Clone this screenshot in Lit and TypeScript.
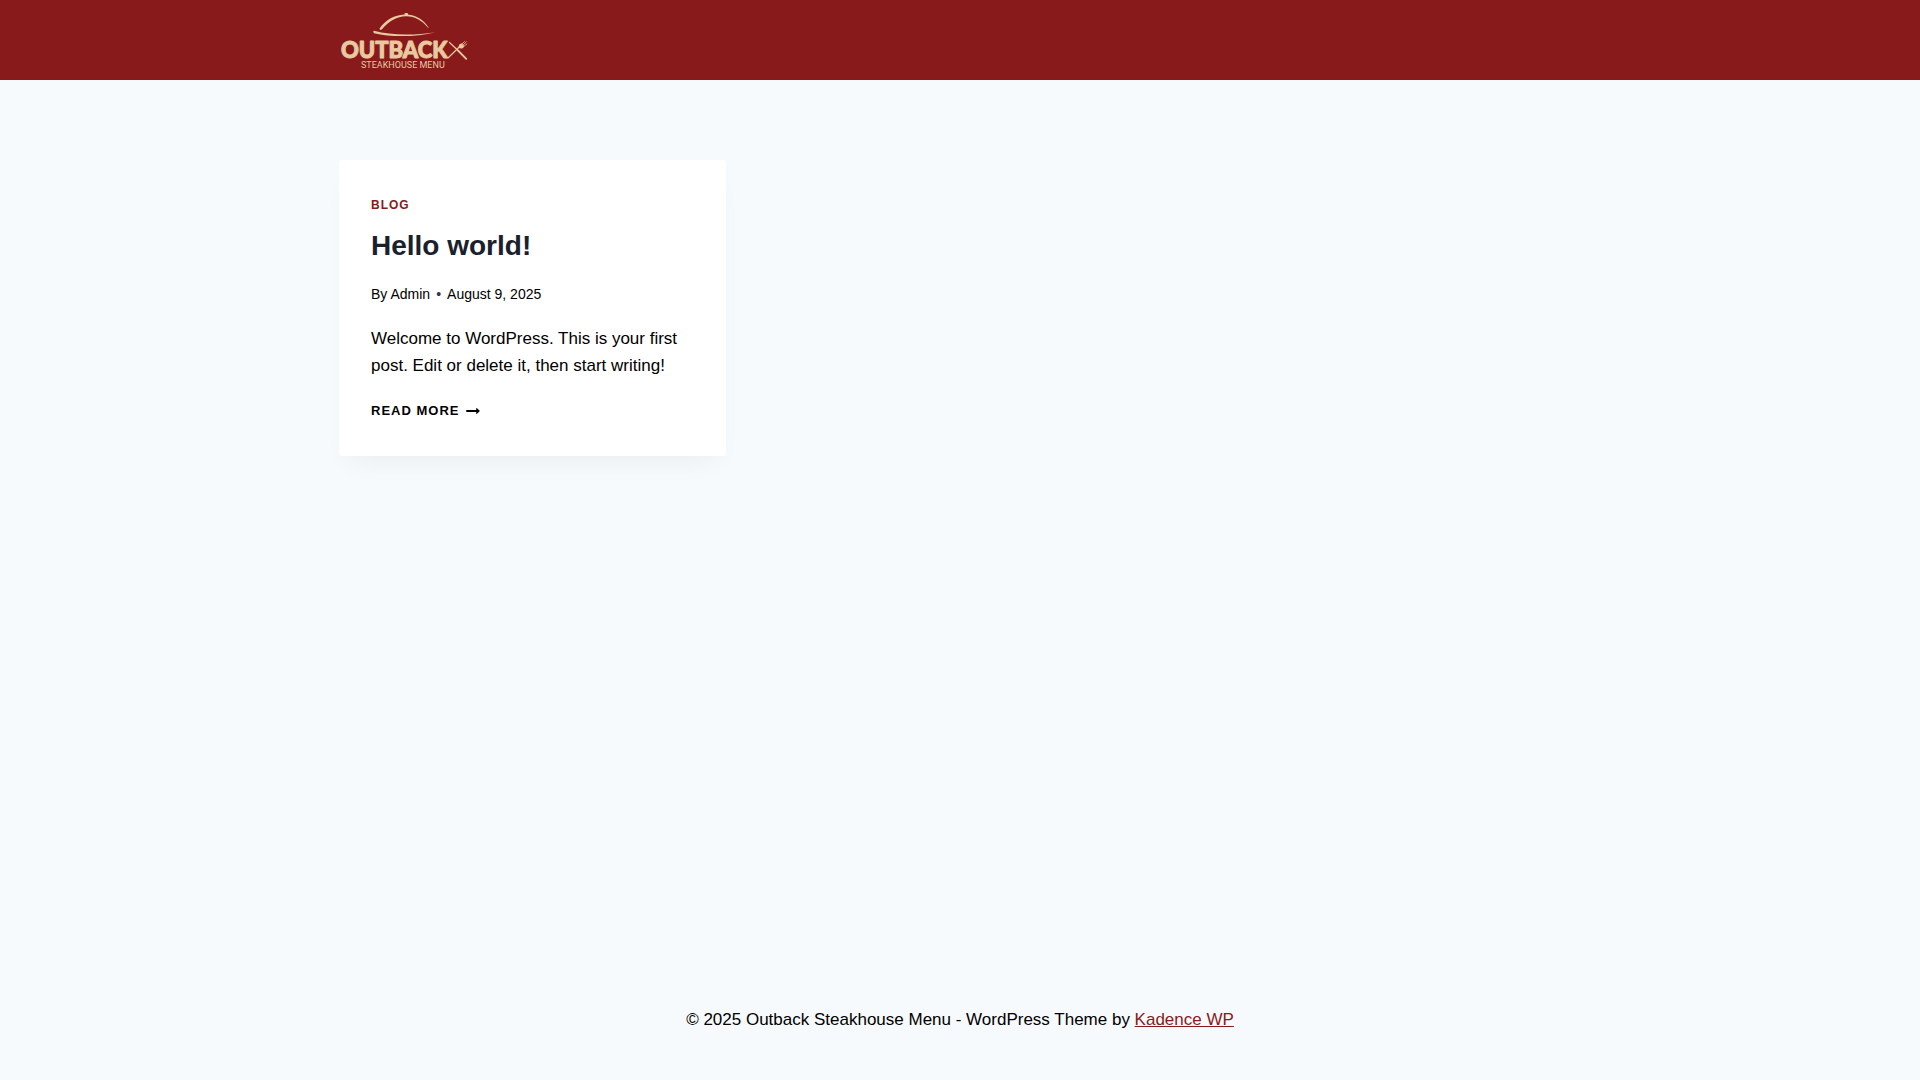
import { LitElement, html, css } from "lit";
import { customElement } from "lit/decorators.js";

@customElement("site-logo")
class SiteLogo extends LitElement {
  static styles = css`
    :host { display: block; }
    .logo { display: block; width: 130px; height: 60px; }
    .brand { font: 900 22px Lato, sans-serif; stroke-width: 1; stroke-linejoin: round; }
    .tagline { font: 9px Roboto, "Liberation Sans", sans-serif; }
  `;
  render() {
    return html`
      <svg class="logo" viewBox="0 0 130 60" role="img" aria-label="Outback Steakhouse Menu" fill="#e8c9a0">
        <path d="M40.500 18.500C47 9.500 56 4.600 67 4.600C77 4.600 85 10 90 18.200L88.800 17.600C83 10.500 76 6.200 67 6.200C58 6.200 50 11 43 19.200Q41 21 40.500 18.500Z" />
        <rect x="65.500" y="3" width="3.500" height="3" rx="1" />
        <path d="M35 20.700C52 25.300 74 25.600 96.500 22.200C76 27.300 52 27.200 35 23.200Q33.500 21 35 20.700Z" />
        <text class="brand" x="2" y="48" stroke="#e8c9a0">OUTBACK</text>
        <g stroke="#e8c9a0" fill="none" stroke-linecap="round">
          <path d="M109.500 47.500L120.500 36.800" stroke-width="1.200" />
          <path d="M110.500 32.500L119 40.500" stroke-width="1.200" />
          <path d="M119 40.500L127.200 48.800" stroke-width="1.800" />
          <path d="M122 35L125.500 31.500M123 36L127.200 32M124 37L127.800 34" stroke-width="0.800" />
        </g>
        <path d="M120.300 34.500L122.500 33.300L125.300 36L124 38Q121.500 39.200 119.800 37.800Q119.300 36.200 120.300 34.500Z" />
        <text class="tagline" x="22" y="58">STEAKHOUSE MENU</text>
      </svg>
    `;
  }
}

@customElement("post-card")
class PostCard extends LitElement {
  static styles = css`
    :host { display: block; }
    .card {
      padding: 32px;
      background: #fff;
      border-radius: 3px;
      box-shadow: 0 15px 25px -10px rgba(0, 0, 0, 0.05);
    }
    a { color: inherit; text-decoration: none; }
    .category {
      display: block;
      font-size: 12px;
      line-height: 27px;
      font-weight: 700;
      letter-spacing: 1px;
    }
    .category { color: #881a1b; }
    .title { margin: 6px 0 16px; font-size: 28px; line-height: 42px; font-weight: 700; color: #1a202c; }
    .meta { display: flex; gap: 6px; font-size: 14px; line-height: 22px; }
    .dot { color: #2d3748; }
    .excerpt { margin: 20px 0 18px; }
    .more {
      display: flex;
      align-items: center;
      gap: 7px;
      width: fit-content;
      font-size: 13px;
      line-height: 27px;
      font-weight: 700;
      letter-spacing: 1px;
    }
    .arrow { width: 14px; height: 14px; }
  `;
  render() {
    return html`
      <article class="card">
        <a class="category" href="#blog">BLOG</a>
        <h2 class="title"><a href="#post">Hello world!</a></h2>
        <div class="meta">
          <span>By <a href="#admin">Admin</a></span>
          <span class="dot">•</span>
          <time datetime="2025-08-09">August 9, 2025</time>
        </div>
        <p class="excerpt">Welcome to WordPress. This is your first post. Edit or delete it, then start writing!</p>
        <a class="more" href="#post">
          READ MORE
          <svg class="arrow" viewBox="0 0 27 28" fill="currentColor" aria-hidden="true">
            <path d="M27 13.953c0 0.141-0.063 0.281-0.156 0.375l-6 5.531c-0.156 0.141-0.359 0.172-0.547 0.094-0.172-0.078-0.297-0.250-0.297-0.453v-3.500h-19.500c-0.281 0-0.500-0.219-0.500-0.500v-3c0-0.281 0.219-0.500 0.500-0.500h19.500v-3.500c0-0.203 0.109-0.375 0.297-0.453s0.391-0.047 0.547 0.078l6 5.469c0.094 0.094 0.156 0.219 0.156 0.359z" />
          </svg>
        </a>
      </article>
    `;
  }
}

@customElement("app-root")
class AppRoot extends LitElement {
  static styles = css`
    :host {
      display: flex;
      flex-direction: column;
      min-height: 100vh;
      background: #f7fafc;
      color: #000;
      font: 17px/27px "Liberation Sans", Arial, sans-serif;
    }
    .header { background: #881a1b; }
    .container { box-sizing: border-box; max-width: 1290px; margin: 0 auto; padding: 0 24px; }
    .bar { display: flex; align-items: center; min-height: 80px; }
    .main { flex: 1; padding: 80px 0; }
    .posts { display: grid; grid-template-columns: repeat(3, minmax(0, 1fr)); gap: 40px; }
    .footer { padding: 20px 0 47px; text-align: center; }
    .credit { margin: 0; }
    .link { color: #881a1b; }
    @media (max-width: 1024px) { .posts { grid-template-columns: repeat(2, minmax(0, 1fr)); } }
    @media (max-width: 640px) { .posts { grid-template-columns: 1fr; } }
  `;
  render() {
    return html`
      <header class="header">
        <div class="container bar"><a href="#home" aria-label="Home"><site-logo></site-logo></a></div>
      </header>
      <main class="main">
        <div class="container posts"><post-card></post-card></div>
      </main>
      <footer class="footer">
        <div class="container">
          <p class="credit">© 2025 Outback Steakhouse Menu - WordPress Theme by <a class="link" href="#kadence">Kadence WP</a></p>
        </div>
      </footer>
    `;
  }
}
